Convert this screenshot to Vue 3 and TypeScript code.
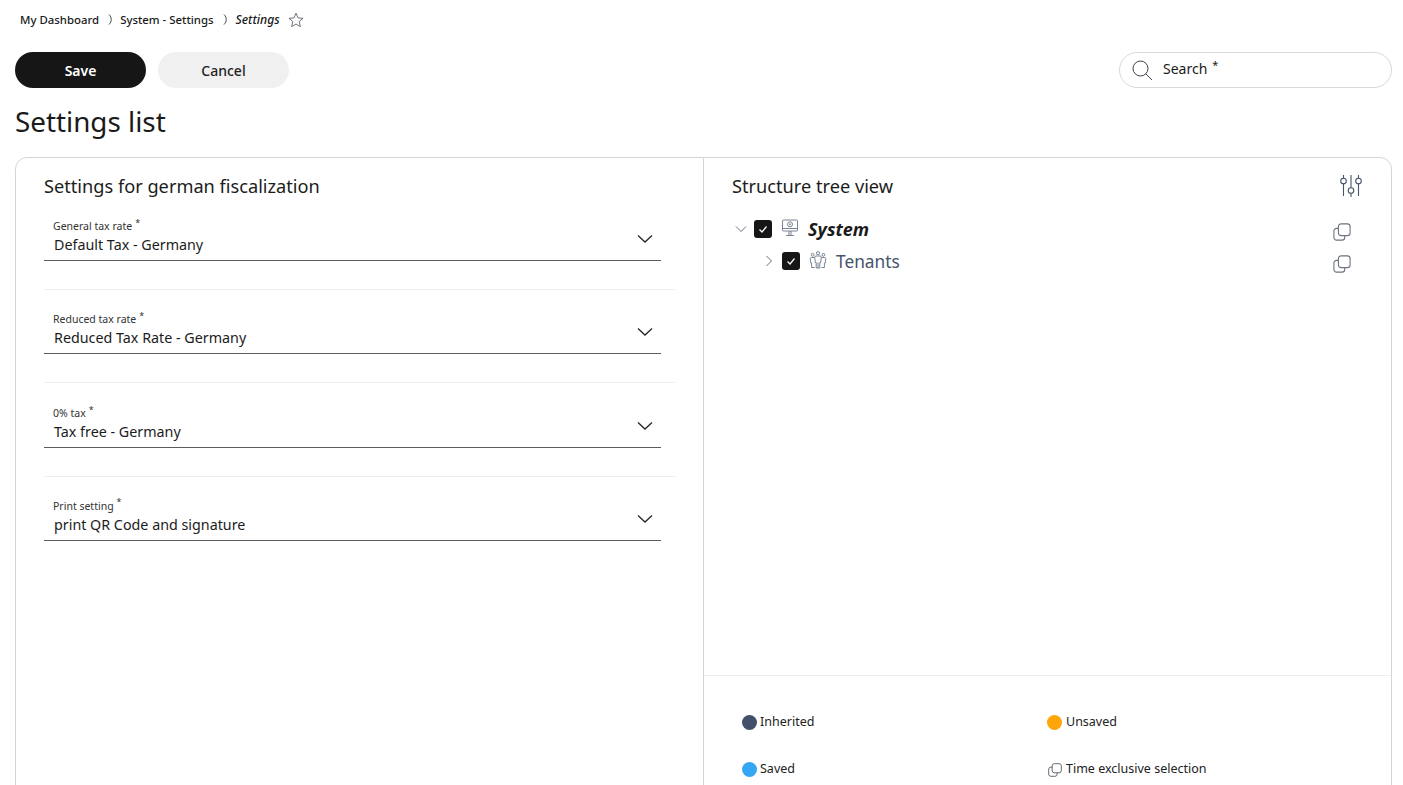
<script setup lang="ts">
interface Field { label: string; value: string }
const fields: Field[] = [
  { label: 'General tax rate', value: 'Default Tax - Germany' },
  { label: 'Reduced tax rate', value: 'Reduced Tax Rate - Germany' },
  { label: '0% tax', value: 'Tax free - Germany' },
  { label: 'Print setting', value: 'print QR Code and signature' },
]
</script>

<template>
  <div class="page">
    <nav class="crumbs">
      <span class="crumb">My Dashboard</span>
      <svg class="sep" width="5" height="11" viewBox="0 0 5 11" fill="none" stroke="#333" stroke-width="0.900"><path d="M1 .5c3 3 3 7 0 10" /></svg>
      <span class="crumb">System - Settings</span>
      <svg class="sep" width="5" height="11" viewBox="0 0 5 11" fill="none" stroke="#333" stroke-width="0.900"><path d="M1 .5c3 3 3 7 0 10" /></svg>
      <span class="crumb current">Settings</span>
      <svg class="star" width="16" height="16" viewBox="0 0 16 16" fill="none" stroke="#4a4f57" stroke-width="0.8" stroke-linejoin="round">
        <path d="M8 1.2l2 4.7 5 .4-3.800 3.300 1.200 5L8 12l-4.400 2.600 1.200-5L1 6.300l5-.4z" />
      </svg>
    </nav>

    <div class="toolbar">
      <button class="btn primary">Save</button>
      <button class="btn secondary">Cancel</button>
      <div class="search">
        <svg width="22" height="22" viewBox="0 0 22 22" fill="none" stroke="#3a3f47" stroke-width="1">
          <circle cx="9.500" cy="9.500" r="7.500" />
          <path d="M15 15l6 6" />
        </svg>
        <span class="search-text">Search</span><sup class="search-star">*</sup>
      </div>
    </div>

    <h1 class="title">Settings list</h1>

    <section class="card">
      <div class="left">
        <h2 class="heading">Settings for german fiscalization</h2>
        <div v-for="f in fields" :key="f.label" class="row">
          <div class="field">
            <div class="field-text">
              <div class="label">{{ f.label }}<sup class="req">*</sup></div>
              <div class="value">{{ f.value }}</div>
            </div>
            <svg class="chev" width="16" height="10" viewBox="0 0 16 10" fill="none" stroke="#23262b" stroke-width="1.300">
              <path d="M1 1.500l7 6.500 7-6.500" />
            </svg>
          </div>
        </div>
      </div>

      <div class="right">
        <div class="tree-area">
          <div class="tree-head">
            <h2 class="heading">Structure tree view</h2>
            <svg class="filter" width="22" height="22" viewBox="0 0 22 22" fill="#fff" stroke="#46536b" stroke-width="1.100">
              <path d="M3.500 0v21M11 0v22M18.500 0v21" />
              <circle cx="3.500" cy="6" r="2.800" />
              <circle cx="11" cy="15.500" r="2.800" />
              <circle cx="18.500" cy="6" r="2.800" />
            </svg>
          </div>

          <div class="node node-root">
            <svg class="arrow" width="12" height="12" viewBox="0 0 12 12" fill="none" stroke="#6b7280" stroke-width="1">
              <path d="M1 3.500l5 5 5-5" />
            </svg>
            <span class="check">
              <svg width="12" height="12" viewBox="0 0 12 12" fill="none" stroke="#fff" stroke-width="1.200"><path d="M2.500 6.500l2.500 2.500 4.500-5.500" /></svg>
            </span>
            <svg class="node-icon" width="18" height="18" viewBox="0 0 18 18" fill="none" stroke="#6b7688" stroke-width="0.900">
              <rect x="1.500" y="1" width="15" height="11" rx="1" />
              <path d="M1.500 9.500h15" />
              <circle cx="9" cy="5.300" r="2.500" />
              <circle cx="9" cy="5.300" r="0.600" />
              <path d="M8 12v4.500M10 12v4.500M5 16.500h8" />
            </svg>
            <span class="node-name root-name">System</span>
            <svg class="copy" width="18" height="18" viewBox="0 0 20 20" fill="#fff" stroke="#6b7280" stroke-width="1.200">
              <rect x="1" y="6" width="12" height="13" rx="3" />
              <rect x="6" y="1" width="13" height="13" rx="3" />
            </svg>
          </div>

          <div class="node node-child">
            <svg class="arrow" width="12" height="12" viewBox="0 0 12 12" fill="none" stroke="#6b7280" stroke-width="1">
              <path d="M3.500 1l5 5-5 5" />
            </svg>
            <span class="check">
              <svg width="12" height="12" viewBox="0 0 12 12" fill="none" stroke="#fff" stroke-width="1.200"><path d="M2.500 6.500l2.500 2.500 4.500-5.500" /></svg>
            </span>
            <svg class="node-icon" width="18" height="18" viewBox="0 0 18 18" fill="none" stroke="#6b7688" stroke-width="0.900">
              <circle cx="9" cy="2.200" r="1.600" />
              <circle cx="3.600" cy="3.800" r="1.400" />
              <circle cx="14.400" cy="3.800" r="1.400" />
              <path d="M7 5h4c.8 0 1.300.5 1.300 1.200l-.6 5.300h-.9V17H7.200v-5.500h-.9l-.6-5.300C5.700 5.500 6.200 5 7 5zM9 11.500V17" />
              <path d="M5.400 6.500H2.500c-.8 0-1.300.5-1.300 1.200l.5 4.300h.9v4.500h3M12.600 6.500h2.900c.8 0 1.300.5 1.300 1.200l-.5 4.300h-.9v4.500h-3" />
            </svg>
            <span class="node-name">Tenants</span>
            <svg class="copy" width="18" height="18" viewBox="0 0 20 20" fill="#fff" stroke="#6b7280" stroke-width="1.200">
              <rect x="1" y="6" width="12" height="13" rx="3" />
              <rect x="6" y="1" width="13" height="13" rx="3" />
            </svg>
          </div>
        </div>

        <div class="legend">
          <div class="legend-item"><span class="dot inherited"></span>Inherited</div>
          <div class="legend-item"><span class="dot unsaved"></span>Unsaved</div>
          <div class="legend-item"><span class="dot saved"></span>Saved</div>
          <div class="legend-item">
            <svg class="legend-copy" width="14" height="14" viewBox="0 0 20 20" fill="#fff" stroke="#555b63" stroke-width="1.300">
              <rect x="1" y="6" width="12" height="13" rx="3" />
              <rect x="6" y="1" width="13" height="13" rx="3" />
            </svg>
            Time exclusive selection
          </div>
        </div>
      </div>
    </section>
  </div>
</template>

<style>
html, body { margin: 0; height: 100%; overflow: hidden; background: #fff; }
</style>

<style scoped>
.page {
  font-family: "Noto Sans", sans-serif;
  color: #1a1a1a;
  height: 785px;
  padding: 0 11px 0 15px;
  overflow: hidden;
  box-sizing: border-box;
}
.crumbs {
  display: flex;
  align-items: center;
  height: 40px;
  padding-left: 5px;
  padding-bottom: 1px;
  box-sizing: border-box;
  font-size: 11.400px;
  font-weight: 500;
}
.sep { margin: 0 7px 0 9px; }
.current { font-style: italic; font-weight: 500; font-size: 12.200px; margin-left: 1px; }
.star { margin-left: 8px; margin-top: 1px; }
.toolbar {
  display: flex;
  align-items: center;
  gap: 12px;
  margin-top: 12px;
  height: 36px;
}
.btn {
  width: 131px;
  height: 36px;
  border: 0;
  border-radius: 18px;
  font: 500 14px "Noto Sans", sans-serif;
}
.primary { background: #161616; color: #fff; font-weight: 600; }
.secondary { background: #f0f0f0; color: #222; }
.search {
  display: flex;
  align-items: center;
  box-sizing: border-box;
  width: 273px;
  height: 36px;
  margin-left: auto;
  padding-left: 11px;
  border: 1px solid #d8d8d8;
  border-radius: 18px;
  font-size: 14px;
}
.search-text { margin-left: 10px; margin-top: -4px; }
.search-star { font-size: 11px; margin: -12px 0 0 5px; line-height: 1; }
.title {
  margin: 12px 0 0;
  height: 44px;
  font-size: 27.800px;
  line-height: 42px;
  font-weight: 400;
}
.card {
  display: flex;
  height: 660px;
  margin-top: 13px;
  box-sizing: border-box;
  border: 1px solid #d5d5d5;
  border-radius: 12px;
}
.left {
  width: 688px;
  flex: none;
  box-sizing: border-box;
  padding: 14px 28px 0;
  border-right: 1px solid #d5d5d5;
}
.heading {
  margin: 0;
  font-size: 18.200px;
  line-height: 28px;
  font-weight: 400;
  color: #1c1c1c;
}
.row {
  height: 93.330px;
  box-sizing: border-box;
  border-bottom: 1px solid #eeeeee;
  padding-top: 9px;
}
.left > .heading + .row { height: 90px; padding-top: 6px; }
.row:nth-child(4) { padding-top: 10px; }
.row:last-child { border-bottom: 0; }
.field {
  display: flex;
  justify-content: space-between;
  align-items: flex-end;
  width: 617px;
  height: 55px;
  box-sizing: border-box;
  border-bottom: 1px solid #5c5c5c;
  padding-right: 8px;
}
.field-text { padding-left: 10px; padding-bottom: 6px; }
.label { font-size: 10.500px; line-height: 14px; color: #333; margin-left: -1px; margin-bottom: 2px; }
.req { font-size: 9px; margin-left: 3px; line-height: 0; }
.value { font-size: 14.300px; line-height: 19px; color: #1c1c1c; }
.chev { margin-bottom: 16px; }
.right {
  flex: 1;
  display: flex;
  flex-direction: column;
  min-width: 0;
}
.tree-area { flex: none; height: 517px; box-sizing: border-box; padding: 14px 28px 0; }
.tree-head { display: flex; justify-content: space-between; align-items: center; height: 28px; }
.filter { margin-right: 1px; margin-top: -1px; }
.node {
  display: flex;
  align-items: center;
  height: 32px;
}
.node-root { margin-top: 13px; padding-left: 3px; }
.node-child { padding-left: 31px; }
.arrow { flex: none; }
.check {
  flex: none;
  display: flex;
  align-items: center;
  justify-content: center;
  box-sizing: border-box;
  width: 18px;
  height: 18px;
  margin-left: 7px;
  background: #161616;
  border-radius: 3px;
}
.node-icon { flex: none; margin-left: 9px; margin-top: -3px; }
.node-name { margin-left: 9px; font-size: 17.300px; color: #46536b; }
.root-name { color: #1a1a1a; font-style: italic; font-weight: 700; font-size: 18px; }
.copy { margin-left: auto; margin-right: 12px; margin-top: 6px; }
.legend {
  flex: 1;
  display: grid;
  grid-template-columns: 305px 1fr;
  grid-auto-rows: 47px;
  padding: 22px 38px 0;
  border-top: 1px solid #eeeeee;
  align-content: start;
}
.legend-item {
  display: flex;
  align-items: center;
  font-size: 12.500px;
  color: #222;
  height: 47px;
}
.dot {
  width: 15px;
  height: 15px;
  border-radius: 50%;
  margin-right: 3px;
  margin-top: 2px;
}
.inherited { background: #43506b; }
.unsaved { background: #ffa50a; margin-right: 4px; }
.saved { background: #35a6f2; }
.legend-copy { margin: 2px 4px 0 1px; }
</style>
